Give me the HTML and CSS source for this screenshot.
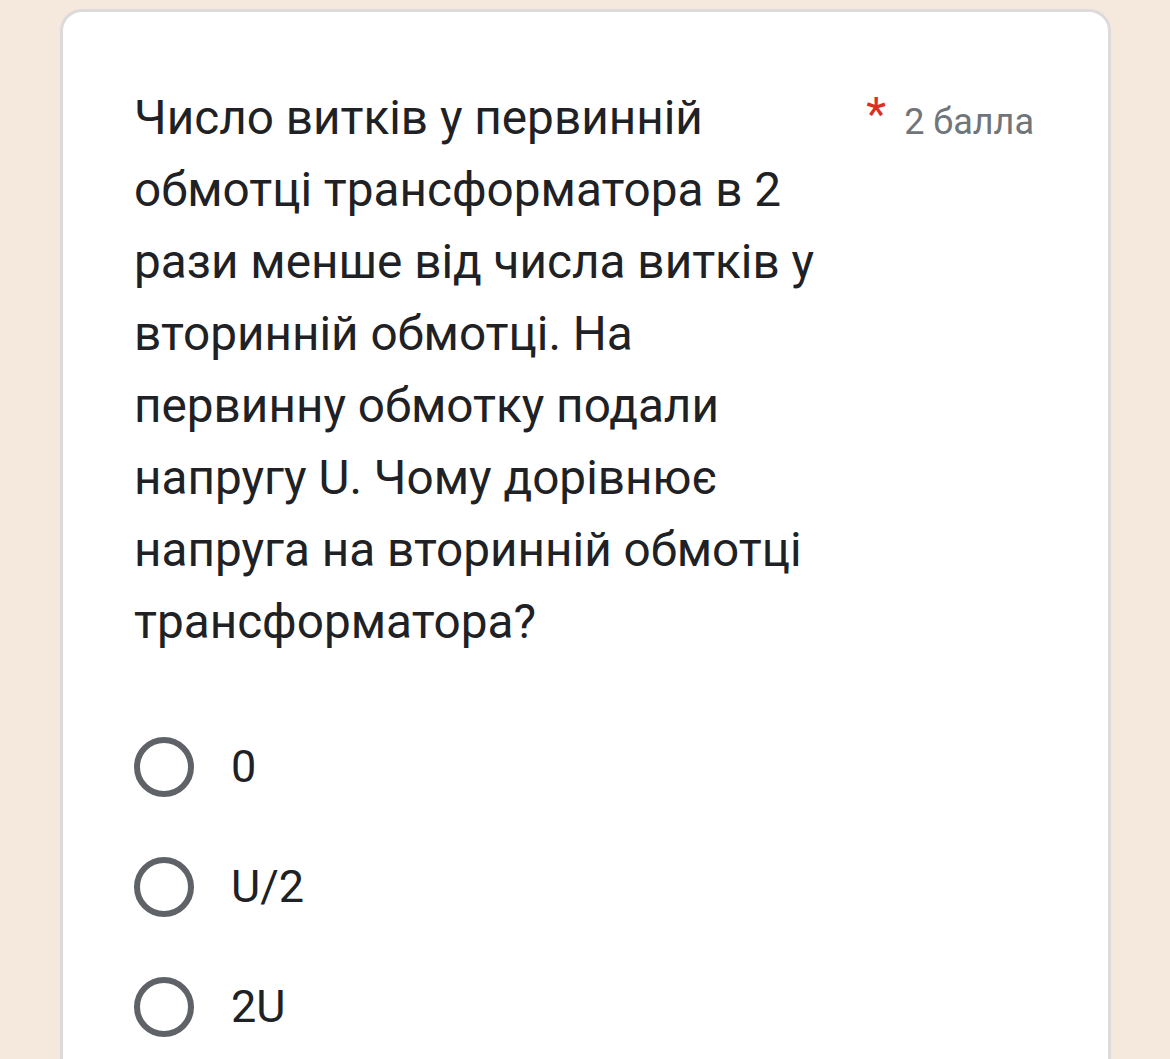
FILE: index.html
```html
<!DOCTYPE html>
<html lang="uk">
<head>
<meta charset="utf-8">
<title>Питання</title>
<link rel="stylesheet" href="styles.css">
</head>
<body>
<div class="page">
  <div class="card">
    <div class="header">
      <div class="title">Число витків у первинній обмотці трансформатора в 2 рази менше від числа витків у вторинній обмотці. На первинну обмотку подали напругу U. Чому дорівнює напруга на вторинній обмотці трансформатора?</div>
      <div class="points"><span class="star">*</span><span class="score">2 балла</span></div>
    </div>
    <div class="options">
      <label class="option"><span class="radio"></span><span class="opt-text">0</span></label>
      <label class="option"><span class="radio"></span><span class="opt-text">U/2</span></label>
      <label class="option"><span class="radio"></span><span class="opt-text">2U</span></label>
    </div>
  </div>
</div>
</body>
</html>
```

FILE: styles.css
```css
html, body {
  margin: 0;
  padding: 0;
  background: #f4e9dc;
  height: 100%;
  overflow: hidden;
}
.page {
  padding: 9px 59px 0 60px;
  font-family: Roboto, "Noto Sans", Arial, sans-serif;
  color: #202124;
}
.card {
  background: #fff;
  border: 3px solid #dcdadb;
  border-radius: 22px;
  padding: 70px 74px 40px 71px;
  height: 1200px;
}
.header {
  display: flex;
  align-items: flex-start;
  justify-content: space-between;
}
.title {
  width: 700px;
  font-size: 47.7px;
  line-height: 72px;
}
.points {
  display: flex;
  align-items: flex-start;
  padding-top: 2px;
}
.star {
  color: #d93025;
  font-size: 46px;
  line-height: 60px;
  margin-right: 18px;
}
.score {
  color: #70757a;
  font-size: 36px;
  line-height: 77px;
}
.options {
  margin-top: 49px;
  display: flex;
  flex-direction: column;
}
.option {
  display: flex;
  align-items: center;
  height: 120px;
}
.radio {
  width: 48px;
  height: 48px;
  border: 6px solid #5f6368;
  border-radius: 50%;
  flex: none;
}
.opt-text {
  margin-left: 37px;
  font-size: 45px;
  line-height: 60px;
}
```
